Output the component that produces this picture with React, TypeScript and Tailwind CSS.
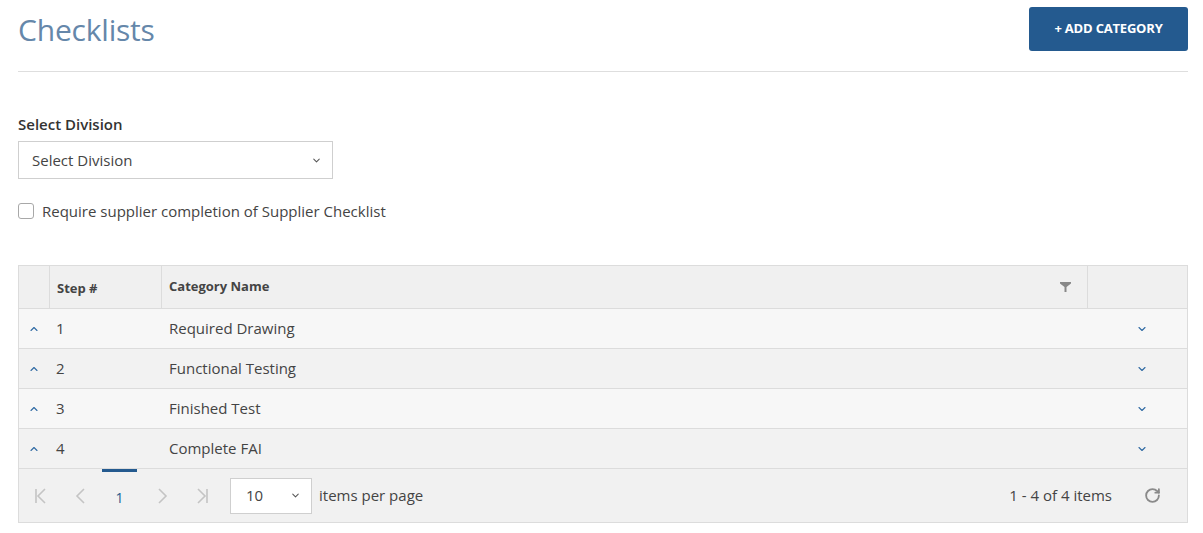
import { ChevronDown, ChevronUp, RotateCw } from "lucide-react";

const rows = [
  { step: 1, name: "Required Drawing" },
  { step: 2, name: "Functional Testing" },
  { step: 3, name: "Finished Test" },
  { step: 4, name: "Complete FAI" },
];

const PagerIcon = ({ kind }: { kind: "first" | "prev" | "next" | "last" }) => {
  return (
    <svg width="14" height="18" viewBox="0 0 14 18" fill="none" stroke="#c4c4c4" strokeWidth="1.6">
      {kind === "first" && (
        <>
          <path d="M2 2v14" />
          <path d="M11 2L4 9l7 7" />
        </>
      )}
      {kind === "prev" && <path d="M10 2L3 9l7 7" />}
      {kind === "next" && <path d="M4 2l7 7-7 7" />}
      {kind === "last" && (
        <>
          <path d="M3 2l7 7-7 7" />
          <path d="M12 2v14" />
        </>
      )}
    </svg>
  );
};

export default function App() {
  return (
    <div className="font-['Open_Sans',sans-serif] bg-white min-h-[533px] pl-[18px] pr-[15px] text-[#333]">
      <div className="flex items-start justify-between pt-[7px] pb-[20px] border-b border-[#dedede]">
        <h1 className="mt-[3px] text-[30px] leading-[40px] text-[#6587aa] tracking-[-0.2px]">Checklists</h1>
        <button className="h-[44px] w-[159px] rounded-[3px] bg-[#245a8f] text-white text-[13px] font-bold tracking-[-0.2px]">
          + ADD CATEGORY
        </button>
      </div>

      <label className="block mt-[42px] mb-[7px] text-[15px] leading-[20px] font-semibold text-[#333]">
        Select Division
      </label>
      <div className="flex items-center justify-between w-[315px] h-[38px] border border-[#cfcfcf] pl-[13px] pr-[10px]">
        <span className="text-[15px] text-[#444]">Select Division</span>
        <ChevronDown size={11} strokeWidth={2.2} color="#555" />
      </div>

      <div className="flex items-center gap-[8px] mt-[24px] h-[16px]">
        <span className="w-[16px] h-[16px] rounded-[3px] border border-[#a8a8a8] bg-white" />
        <span className="text-[15px] text-[#444]">Require supplier completion of Supplier Checklist</span>
      </div>

      <div className="mt-[46px] border border-[#dcdcdc]">
        <div className="grid grid-cols-[31px_112px_1fr_99px] h-[43px] bg-[#f0f0f0] border-b border-[#dcdcdc] text-[13px] font-bold text-[#444]">
          <div className="border-r border-[#dcdcdc]" />
          <div className="flex items-center pl-[7px] pt-[3px] border-r border-[#dcdcdc]">Step #</div>
          <div className="flex items-center justify-between pl-[7px] pr-[16px] border-r border-[#dcdcdc]">
            <span>Category Name</span>
            <svg width="11" height="10" viewBox="0 0 11 10" fill="#888">
              <path d="M0 0h11v1.5L6.5 5v5h-2V5L0 1.5z" />
            </svg>
          </div>
          <div />
        </div>

        {rows.map((r, i) => (
          <div
            key={r.step}
            className={`grid grid-cols-[31px_112px_1fr_99px] h-[40px] border-b border-[#dcdcdc] text-[15px] text-[#444] ${
              i % 2 === 0 ? "bg-[#f7f7f7]" : "bg-[#f2f2f2]"
            }`}
          >
            <div className="flex items-center pl-[9px]">
              <ChevronUp size={12} strokeWidth={2.2} color="#2f6aa3" />
            </div>
            <div className="flex items-center pl-[6px]">{r.step}</div>
            <div className="flex items-center pl-[7px]">{r.name}</div>
            <div className="flex items-center pl-[48px]">
              <ChevronDown size={12} strokeWidth={2.2} color="#2f6aa3" />
            </div>
          </div>
        ))}

        <div className="flex items-center h-[53px] bg-[#f1f1f1] pl-[15px] pr-[26px] text-[15px] text-[#444]">
          <PagerIcon kind="first" />
          <span className="ml-[26px]"><PagerIcon kind="prev" /></span>
          <div className="relative ml-[14px] w-[35px] h-[53px] flex items-center justify-center pt-[4px] text-[14px] text-[#245a8f]">
            <span className="absolute top-0 left-0 w-[35px] h-[3px] bg-[#245a8f]" />
            1
          </div>
          <span className="ml-[18px]"><PagerIcon kind="next" /></span>
          <span className="ml-[26px]"><PagerIcon kind="last" /></span>
          <div className="ml-[21px] flex items-center justify-between w-[82px] h-[36px] bg-white border border-[#cfcfcf] pl-[15px] pr-[10px]">
            <span>10</span>
            <ChevronDown size={11} strokeWidth={2.2} color="#555" />
          </div>
          <span className="ml-[7px]">items per page</span>
          <span className="ml-auto">1 - 4 of 4 items</span>
          <span className="ml-[32px]">
            <RotateCw size={17} strokeWidth={2.6} color="#8a8a8a" />
          </span>
        </div>
      </div>
    </div>
  );
}
